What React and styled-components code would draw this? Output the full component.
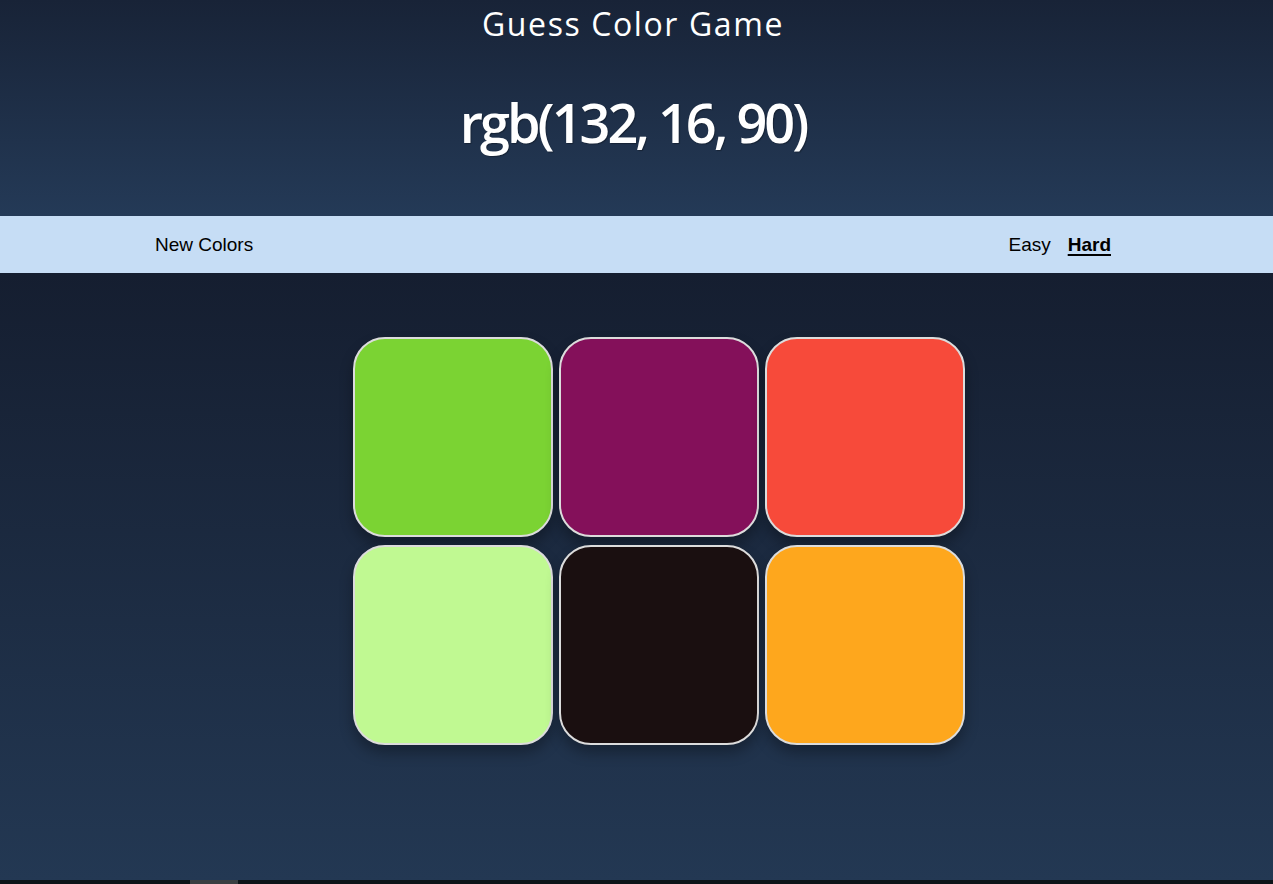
import React from "react";
import styled, { createGlobalStyle } from "styled-components";

const Global = createGlobalStyle`
  html, body { margin: 0; padding: 0; }
  body { font-family: "Liberation Sans", Arial, sans-serif; background: #0d1418; }
  * { box-sizing: border-box; }
`;

const Page = styled.div`
  width: 100%;
  height: 884px;
  display: flex;
  flex-direction: column;
  overflow: hidden;
`;

const Header = styled.header`
  height: 216px;
  padding-right: 7px;
  background: linear-gradient(180deg, #182337 0%, #243a57 100%);
  display: flex;
  flex-direction: column;
  align-items: center;
  color: #fff;
  font-family: "Open Sans", sans-serif;
`;

const Title = styled.h1`
  margin: 0;
  padding-top: 2px;
  font-size: 32px;
  font-weight: 400;
  letter-spacing: 1.6px;
  line-height: 44px;
`;

const Target = styled.h2`
  margin: 40px 0 0;
  font-size: 54px;
  font-weight: 600;
  line-height: 72px;
  letter-spacing: -3px;
  text-shadow: 1px 1px 1px rgba(0, 0, 0, 0.3);
`;

const Bar = styled.nav`
  height: 57px;
  padding-right: 7px;
  background: #c6ddf5;
  display: flex;
  justify-content: center;
`;

const BarInner = styled.div`
  width: 956px;
  display: flex;
  align-items: center;
  justify-content: space-between;
  font-size: 19px;
  color: #000;
`;

const Modes = styled.div`
  display: flex;
  gap: 17px;
`;

const Mode = styled.span`
  font-weight: ${(p) => (p.$active ? 700 : 400)};
  text-decoration: ${(p) => (p.$active ? "underline" : "none")};
  text-underline-offset: 3px;
  text-decoration-thickness: 2px;
  cursor: pointer;
`;

const Main = styled.main`
  flex: 1;
  background: linear-gradient(180deg, #151e30 0%, #233853 100%);
  display: flex;
  justify-content: center;
  padding: 64px 0 0 44px;
`;

const Grid = styled.div`
  display: grid;
  grid-template-columns: repeat(3, 200px);
  grid-auto-rows: 200px;
  column-gap: 6px;
  row-gap: 8px;
  align-content: start;
`;

const Tile = styled.div`
  border: 2px solid #dcdcdc;
  border-radius: 32px;
  background: ${(p) => p.$color};
  box-shadow: 0 8px 14px rgba(0, 0, 0, 0.3);
  cursor: pointer;
`;

const Footer = styled.div`
  height: 4px;
  background: #0d1418;
  position: relative;
`;

const Thumb = styled.div`
  position: absolute;
  left: 190px;
  top: 0;
  width: 48px;
  height: 4px;
  background: #3a3f42;
`;

const colors = [
  "rgb(123, 211, 51)",
  "rgb(132, 16, 90)",
  "rgb(247, 74, 58)",
  "rgb(192, 249, 146)",
  "rgb(26, 15, 16)",
  "rgb(254, 167, 29)",
];

export default function App() {
  return (
    <Page>
      <Global />
      <Header>
        <Title>Guess Color Game</Title>
        <Target>rgb(132, 16, 90)</Target>
      </Header>
      <Bar>
        <BarInner>
          <Mode>New Colors</Mode>
          <Modes>
            <Mode>Easy</Mode>
            <Mode $active>Hard</Mode>
          </Modes>
        </BarInner>
      </Bar>
      <Main>
        <Grid>
          {colors.map((c) => (
            <Tile key={c} $color={c} />
          ))}
        </Grid>
      </Main>
      <Footer>
        <Thumb />
      </Footer>
    </Page>
  );
}
